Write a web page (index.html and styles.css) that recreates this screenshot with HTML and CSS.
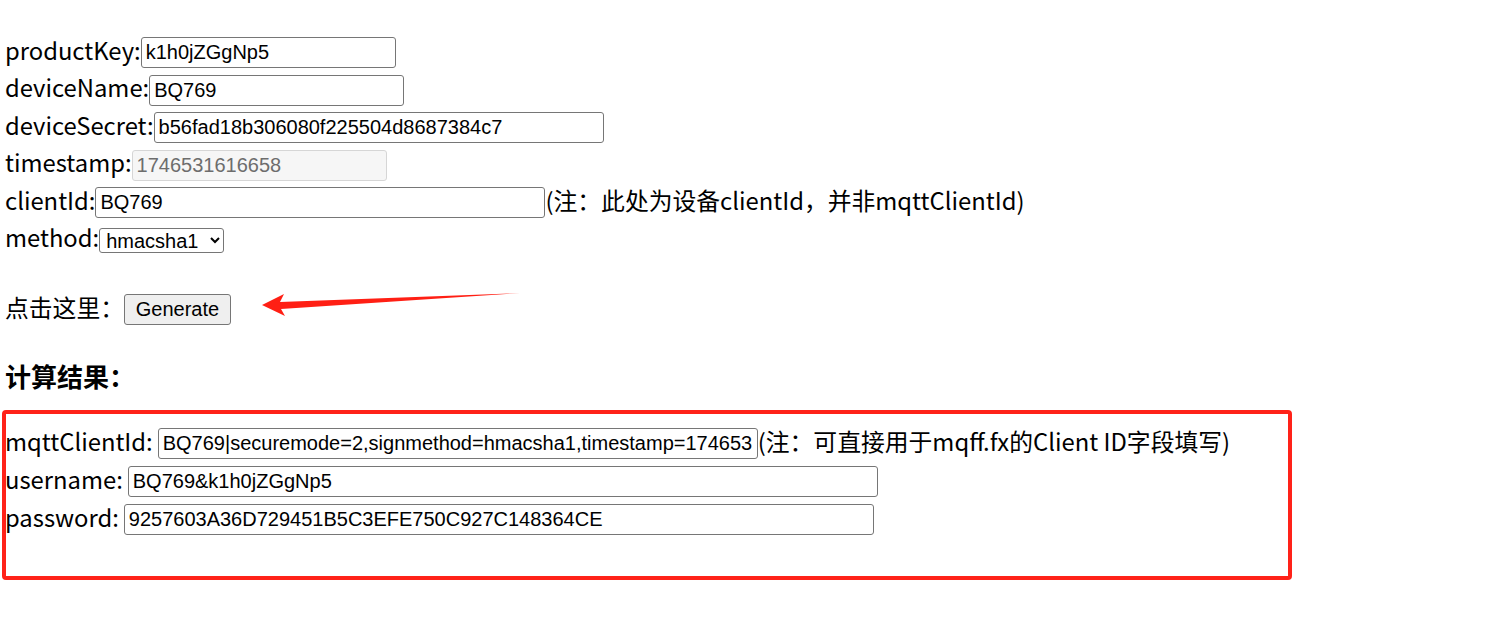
FILE: index.html
```html
<!DOCTYPE html>
<html>
<head>
<meta charset="utf-8">
<title>MQTT Sign</title>
<link rel="stylesheet" href="styles.css">
</head>
<body>
<div class="page">
  <div class="form">
    <div class="row"><label>productKey:</label><input class="w255" type="text" value="k1h0jZGgNp5"></div>
    <div class="row"><label>deviceName:</label><input class="w255" type="text" value="BQ769"></div>
    <div class="row"><label>deviceSecret:</label><input class="w450" type="text" value="b56fad18b306080f225504d8687384c7"></div>
    <div class="row"><label>timestamp:</label><input class="w255" type="text" value="1746531616658" disabled></div>
    <div class="row"><label>clientId:</label><input class="w450" type="text" value="BQ769"><span class="note">(注：此处为设备clientId，并非mqttClientId)</span></div>
    <div class="row"><label>method:</label><select class="sel"><option>hmacsha1</option></select></div>
  </div>
  <div class="row gen"><span>点击这里：</span><button class="btn" type="button">Generate</button></div>
  <h3 class="title">计算结果：</h3>
  <div class="result">
    <div class="row rrow"><label class="sp">mqttClientId:</label><input class="w600" type="text" value="BQ769|securemode=2,signmethod=hmacsha1,timestamp=1746531616658|"><span class="note">(注：可直接用于mqff.fx的Client ID字段填写)</span></div>
    <div class="row rrow"><label class="sp">username:</label><input class="w750" type="text" value="BQ769&amp;k1h0jZGgNp5"></div>
    <div class="row rrow"><label class="sp">password:</label><input class="w750" type="text" value="9257603A36D729451B5C3EFE750C927C148364CE"></div>
  </div>
</div>
<div class="mark-box"></div>
<svg class="mark-arrow" width="280" height="40" viewBox="0 0 280 40">
  <polygon points="7,20 29,9 25,17 265,8 26,24 30,31" fill="#ff1f14"/>
</svg>
</body>
</html>
```
FILE: styles.css
```css
html, body {
  margin: 0;
  padding: 0;
  background: #ffffff;
}
body {
  font-family: "Noto Sans CJK SC", "Noto Sans", sans-serif;
  font-size: 23.8px;
  color: #000;
}
.page {
  padding: 34px 0 0 5px;
}
.row {
  display: flex;
  align-items: center;
  height: 37.5px;
  white-space: nowrap;
}
label, .note, .gen span {
  line-height: 1;
  position: relative;
  top: -3px;
}
.sp {
  margin-right: 5px;
}
input {
  font-family: "Liberation Sans", Arial, sans-serif;
  font-size: 20px;
  height: 31px;
  box-sizing: border-box;
  padding: 1px 4px;
  margin: 0;
  border: 1px solid #767676;
  border-radius: 3px;
  color: #000;
  background: #fff;
}
input:disabled {
  background: #f6f6f6;
  border-color: #d6d6d6;
  color: #6d6d6d;
}
.w255 { width: 255px; }
.w450 { width: 450px; }
.w600 { width: 600px; }
.w750 { width: 750px; }
.sel {
  font-family: "Liberation Sans", Arial, sans-serif;
  font-size: 20px;
  height: 25px;
  width: 125px;
  margin: 0;
  padding: 0 2px;
  border: 1px solid #767676;
  border-radius: 3px;
  background: #fff;
  color: #000;
}
.gen {
  margin-top: 32px;
}
.btn {
  font-family: "Liberation Sans", Arial, sans-serif;
  font-size: 20px;
  height: 31px;
  width: 107px;
  margin: 0;
  padding: 0;
  background: #efefef;
  border: 1px solid #767676;
  border-radius: 3px;
  color: #000;
}
.title {
  font-size: 26px;
  font-weight: bold;
  margin: 29px 0 0 0;
  height: 36px;
  line-height: 36px;
}
.result {
  padding-top: 31px;
}
.rrow {
  height: 38px;
}
.mark-box {
  position: absolute;
  left: 2px;
  top: 410px;
  width: 1282px;
  height: 162px;
  border: 4px solid #ff2219;
  border-radius: 4px;
}
.mark-arrow {
  position: absolute;
  left: 255px;
  top: 285px;
}
```
